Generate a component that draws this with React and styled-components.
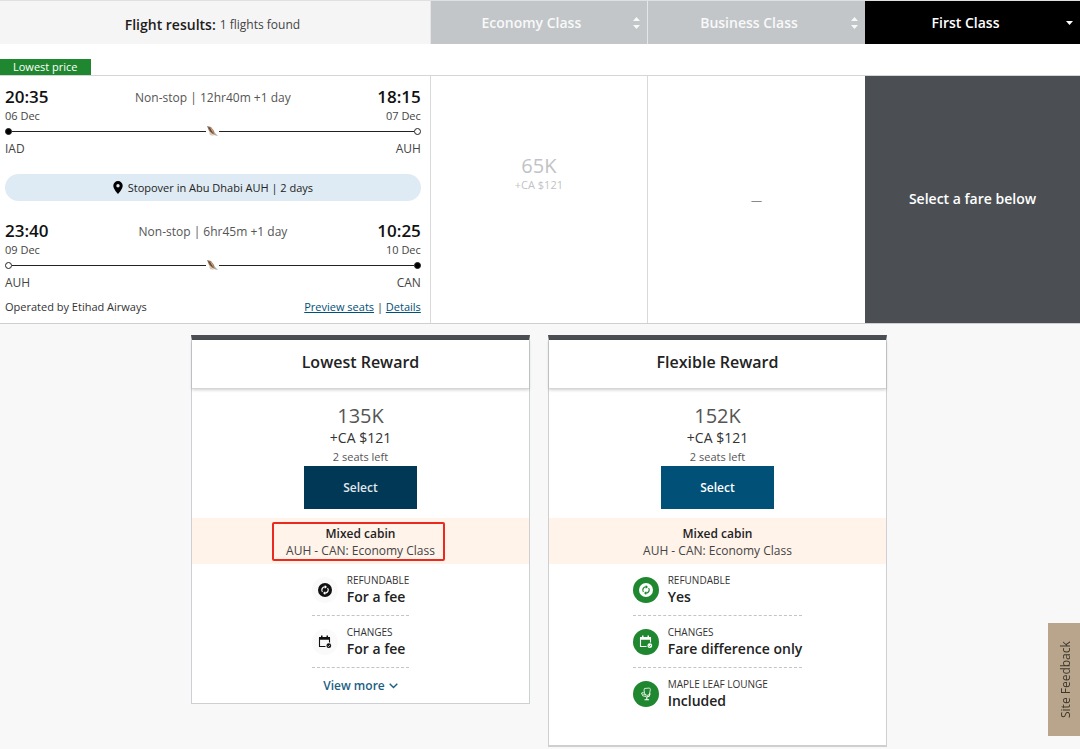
import styled, { createGlobalStyle, css } from "styled-components";

const GlobalStyle = createGlobalStyle`
  * {
    box-sizing: border-box;
  }

  body {
    margin: 0;
    background: #f8f8f8;
    color: #222;
    font-family: "Open Sans", "Noto Sans", sans-serif;
    font-size: 12px;
  }

  button {
    font-family: inherit;
    cursor: pointer;
  }

  h1, h2, p {
    margin: 0;
  }
`;

const columns = css`
  display: grid;
  grid-template-columns: 39.8% 20.1% 20.2% 1fr;
`;

const Results = styled.main`
  background: #fff;
`;

const HeaderRow = styled.header`
  ${columns}
  height: 44px;
  border-top: 1px solid #dfe1e1;
`;

const Title = styled.div`
  display: flex;
  align-items: center;
  justify-content: center;
  gap: 4px;
  padding: 4px 5px 0 0;
  background: #f5f5f5;
  font-size: 12px;
  line-height: 20px;
  color: #444;
`;

const TitleText = styled.h1`
  font-size: 14px;
  font-weight: 600;
  color: #1c1c1c;
`;

const CabinTab = styled.button`
  display: grid;
  grid-template-columns: 1fr auto;
  align-items: center;
  padding: 0 7px 0 0;
  border: 0;
  border-left: 1px solid ${(props) => (props.$active ? "#000" : "#e4e6e7")};
  background: ${(props) => (props.$active ? "#000" : "#c2c6c9")};
  color: ${(props) => (props.$active ? "#fff" : "#f8f9f9")};
  font-size: 14px;
  font-weight: 600;
`;

const TabLabel = styled.span`
  text-align: center;
`;

const BadgeRow = styled.div`
  display: flex;
  padding-top: 15px;
`;

const Badge = styled.span`
  padding: 0 13px;
  background: #1f8730;
  color: #fff;
  font-size: 11px;
  line-height: 16px;
`;

const FlightRow = styled.section`
  ${columns}
  min-height: 249px;
  border-top: 1px solid #d5d5d5;
  border-bottom: 1px solid #cfcfcf;
`;

const Itinerary = styled.div`
  padding: 9px 9px 0 5px;
`;

const LegTop = styled.div`
  display: flex;
  justify-content: space-between;
  height: 23px;
  line-height: 23px;
`;

const Time = styled.span`
  font-size: 17px;
  font-weight: 600;
  color: #111;
`;

const Duration = styled.span`
  font-size: 12px;
  line-height: 26px;
  color: #555;
`;

const LegDates = styled.div`
  display: flex;
  justify-content: space-between;
  font-size: 11px;
  line-height: 15px;
  color: #444;
`;

const LegCodes = styled.div`
  display: flex;
  justify-content: space-between;
  font-size: 12px;
  line-height: 20px;
  color: #444;
`;

const Track = styled.div`
  display: flex;
  align-items: center;
  height: 16px;
`;

const Dot = styled.span`
  width: 7px;
  height: 7px;
  border: 1px solid #222;
  border-radius: 50%;
  background: ${(props) => (props.$filled ? "#000" : "#fff")};
`;

const Line = styled.span`
  flex: 1;
  height: 1px;
  background: #222;
`;

const Stopover = styled.div`
  display: flex;
  align-items: center;
  justify-content: center;
  gap: 5px;
  height: 27px;
  margin: 15px 0 18px;
  border-radius: 14px;
  background: #deebf4;
  font-size: 11px;
  color: #222;
`;

const ItineraryFooter = styled.div`
  display: flex;
  justify-content: space-between;
  margin-top: 6px;
  font-size: 11px;
  line-height: 16px;
  color: #333;
`;

const TextLink = styled.a`
  color: #005078;
`;

const FareCell = styled.div`
  display: flex;
  flex-direction: column;
  align-items: center;
  justify-content: center;
  border-left: 1px solid #d9d9d9;
  padding-bottom: ${(props) => (props.$empty ? "0" : "54px")};
  color: ${(props) => (props.$empty ? "#888" : "#bfc3c6")};
  font-size: 11px;
  line-height: 14px;
`;

const FarePoints = styled.span`
  font-size: 20px;
  line-height: 24px;
`;

const SelectedCell = styled.div`
  display: flex;
  align-items: center;
  justify-content: center;
  padding-bottom: 2px;
  background: #4b4f54;
  color: #fff;
  font-size: 14px;
  font-weight: 600;
`;

const Fares = styled.section`
  display: flex;
  align-items: flex-start;
  justify-content: center;
  gap: 18px;
  padding: 11px 18px 3px 16px;
  background: #f8f8f8;
`;

const Card = styled.article`
  flex: 0 1 339px;
  padding-bottom: ${(props) => (props.$tall ? "25px" : "8px")};
  border: 1px solid #cdcfd0;
  border-top: 5px solid #4b4f54;
  border-bottom-width: ${(props) => (props.$tall ? "2px" : "1px")};
  background: #fff;
`;

const CardTitle = styled.h2`
  height: 49px;
  border-bottom: 1px solid #d5d5d5;
  box-shadow: 0 1px 3px rgba(0, 0, 0, 0.2);
  font-size: 16px;
  font-weight: 600;
  line-height: 44px;
  text-align: center;
  color: #222;
`;

const Price = styled.div`
  display: flex;
  flex-direction: column;
  align-items: center;
  padding: 13px 0 9px;
`;

const Points = styled.span`
  font-size: 20px;
  line-height: 27px;
  color: #555;
`;

const Cash = styled.span`
  font-size: 14px;
  line-height: 17px;
  color: #333;
`;

const Seats = styled.span`
  margin-top: 2px;
  font-size: 11px;
  line-height: 18px;
  color: #555;
`;

const SelectButton = styled.button`
  width: 113px;
  height: 43px;
  border: 0;
  background: ${(props) => (props.$dark ? "#003855" : "#005078")};
  color: ${(props) => (props.$dark ? "#e3e8ec" : "#fff")};
  font-size: 12px;
  font-weight: 600;
`;

const MixedCabin = styled.div`
  position: relative;
  height: 46px;
  padding-top: 7px;
  background: #fff3ea;
  font-size: 12px;
  line-height: 17px;
  text-align: center;
  color: #444;
`;

const MixedTitle = styled.p`
  font-weight: 600;
  color: #222;
`;

const Highlight = styled.span`
  position: absolute;
  inset: 4px 84px 3px 80px;
  border: 2px solid #ea2a20;
  border-radius: 2px;
`;

const Features = styled.ul`
  width: fit-content;
  margin: 0 auto;
  padding: 0;
  list-style: none;
`;

const Feature = styled.li`
  display: flex;
  align-items: center;
  gap: 9px;
  height: 52px;
  border-bottom: 1px dashed ${(props) => (props.$last ? "transparent" : "#c4c4c4")};
`;

const FeatureIcon = styled.span`
  display: grid;
  place-items: center;
  width: 26px;
  height: 26px;
  border-radius: 50%;
  background: ${(props) => (props.$included ? "#1f8730" : "#fafafa")};
  color: ${(props) => (props.$included ? "#fff" : "#111")};
`;

const FeatureText = styled.div`
  padding-bottom: 1px;
`;

const FeatureLabel = styled.p`
  font-size: 10px;
  line-height: 16px;
  color: #333;
`;

const FeatureValue = styled.p`
  font-size: 14px;
  font-weight: 600;
  line-height: 18px;
  color: #222;
`;

const ViewMore = styled.button`
  display: flex;
  align-items: center;
  gap: 4px;
  margin: 9px auto 0;
  padding: 0;
  border: 0;
  background: none;
  color: #1c5f83;
  font-size: 12px;
  font-weight: 600;
  line-height: 18px;
`;

const Feedback = styled.button`
  position: fixed;
  right: 0;
  bottom: 13px;
  width: 32px;
  height: 113px;
  padding: 0 4px 0 0;
  border: 0;
  background: #b9a58b;
  color: #3c3830;
  font-size: 12px;
  writing-mode: vertical-rl;
  transform: rotate(180deg);
`;

const SortIcon = ({ active }) => (
  <svg width="8" height="14" viewBox="0 0 8 14" fill="currentColor" aria-hidden="true">
    {active ? (
      <path d="M1 5h7L4.500 9z" />
    ) : (
      <>
        <path d="M1 5h7L4.500 1z" />
        <path d="M1 9h7L4.500 13z" />
      </>
    )}
  </svg>
);

const AirlineIcon = () => (
  <svg width="13" height="12" viewBox="0 0 13 12" aria-hidden="true">
    <path d="M1 1 5 2 8 6 9 10 6 9 3 6z" fill="#9c765a" />
    <path d="M2 2 4 3 7 8 5 7z" fill="#5b4a40" />
    <path d="M4 2 6 4 8 8 6 6z" fill="#d8a878" />
    <path d="M3 7 6 9 8 11 4 10z" fill="#d9c8a9" />
    <path d="M8 7 10 9 12 11 8 10z" fill="#a7a7a5" />
  </svg>
);

const PinIcon = () => (
  <svg width="10" height="13" viewBox="0 0 10 13" aria-hidden="true">
    <path
      fillRule="evenodd"
      d="M5 0a4.700 4.700 0 0 0-4.700 4.700C.3 8 5 13 5 13s4.700-5 4.700-8.300A4.700 4.700 0 0 0 5 0zm0 3a1.700 1.700 0 1 1 0 3.400A1.700 1.700 0 0 1 5 3z"
    />
  </svg>
);

const RefundIcon = ({ included }) => {
  const arrows = included ? "#1f8730" : "#fff";
  return (
    <svg width="14" height="14" viewBox="0 0 14 14" aria-hidden="true">
      <circle cx="7" cy="7" r="7" fill="currentColor" />
      <g fill="none" stroke={arrows} strokeWidth="1.200">
        <path d="M4.400 9A3.200 3.200 0 0 1 7 3.900" />
        <path d="M9.600 5A3.200 3.200 0 0 1 7 10.100" />
      </g>
      <path d="M6.800 2 9 3.900 6.800 5.800zM7.200 8.200 5 10.100l2.200 1.900z" fill={arrows} />
    </svg>
  );
};

const ChangeIcon = ({ included }) => (
  <svg width="14" height="14" viewBox="0 0 14 14" aria-hidden="true">
    <path d="M1 2h11v2.700H1zM3 .5h1.500V3H3zM8.500.5H10V3H8.500z" fill="currentColor" />
    <path d="M7.500 11.500h-6V3h10v4.500" fill="none" stroke="currentColor" strokeWidth="1.100" />
    <circle cx="10.800" cy="10.700" r="2.400" fill="currentColor" />
    <path
      d="m9.600 10.700.9.900 1.600-1.700"
      fill="none"
      stroke={included ? "#1f8730" : "#fff"}
      strokeWidth=".7"
    />
  </svg>
);

const LoungeIcon = () => (
  <svg width="12" height="14" viewBox="0 0 12 14" fill="none" stroke="currentColor" aria-hidden="true">
    <path d="M4.500 1.500 9.500 1l.9 1.200-1 5.300L7 8.500 4.800 7 4 3z" strokeWidth=".8" />
    <path d="M3.800 5.200 1.500 6l1.200 2.800L6 9.600M2.600 6.800l3.200 1.400" strokeWidth=".8" />
    <path d="M10.200 6.500 9 9.300 6.800 10v2.500M4.500 12.700h4.600" strokeWidth="1.100" />
  </svg>
);

const ChevronIcon = () => (
  <svg width="9" height="6" viewBox="0 0 9 6" fill="none" stroke="currentColor" strokeWidth="1.400" aria-hidden="true">
    <path d="m.7.8 3.800 3.800L8.300.8" />
  </svg>
);

const icons = {
  refund: RefundIcon,
  change: ChangeIcon,
  lounge: LoungeIcon,
};

const cabins = ["Economy Class", "Business Class", "First Class"];

const legs = [
  {
    from: { time: "20:35", date: "06 Dec", code: "IAD" },
    to: { time: "18:15", date: "07 Dec", code: "AUH" },
    duration: "Non-stop | 12hr40m +1 day",
    startFilled: true,
  },
  {
    from: { time: "23:40", date: "09 Dec", code: "AUH" },
    to: { time: "10:25", date: "10 Dec", code: "CAN" },
    duration: "Non-stop | 6hr45m +1 day",
    startFilled: false,
  },
];

const fares = [
  {
    name: "Lowest Reward",
    points: "135K",
    dark: true,
    highlighted: true,
    viewMore: true,
    features: [
      { icon: "refund", label: "REFUNDABLE", value: "For a fee" },
      { icon: "change", label: "CHANGES", value: "For a fee" },
    ],
  },
  {
    name: "Flexible Reward",
    points: "152K",
    features: [
      { icon: "refund", label: "REFUNDABLE", value: "Yes", included: true },
      { icon: "change", label: "CHANGES", value: "Fare difference only", included: true },
      { icon: "lounge", label: "MAPLE LEAF LOUNGE", value: "Included", included: true },
    ],
  },
];

const Leg = ({ leg }) => (
  <div>
    <LegTop>
      <Time>{leg.from.time}</Time>
      <Duration>{leg.duration}</Duration>
      <Time>{leg.to.time}</Time>
    </LegTop>
    <LegDates>
      <span>{leg.from.date}</span>
      <span>{leg.to.date}</span>
    </LegDates>
    <Track>
      <Dot $filled={leg.startFilled} />
      <Line />
      <AirlineIcon />
      <Line />
      <Dot $filled={!leg.startFilled} />
    </Track>
    <LegCodes>
      <span>{leg.from.code}</span>
      <span>{leg.to.code}</span>
    </LegCodes>
  </div>
);

const FareCard = ({ fare }) => (
  <Card $tall={!fare.viewMore}>
    <CardTitle>{fare.name}</CardTitle>
    <Price>
      <Points>{fare.points}</Points>
      <Cash>+CA $121</Cash>
      <Seats>2 seats left</Seats>
      <SelectButton type="button" $dark={fare.dark}>
        Select
      </SelectButton>
    </Price>
    <MixedCabin>
      <MixedTitle>Mixed cabin</MixedTitle>
      <p>AUH - CAN: Economy Class</p>
      {fare.highlighted && <Highlight />}
    </MixedCabin>
    <Features>
      {fare.features.map((feature, index) => {
        const Icon = icons[feature.icon];
        return (
          <Feature
            key={feature.label}
            $last={!fare.viewMore && index === fare.features.length - 1}
          >
            <FeatureIcon $included={feature.included}>
              <Icon included={feature.included} />
            </FeatureIcon>
            <FeatureText>
              <FeatureLabel>{feature.label}</FeatureLabel>
              <FeatureValue>{feature.value}</FeatureValue>
            </FeatureText>
          </Feature>
        );
      })}
    </Features>
    {fare.viewMore && (
      <ViewMore type="button">
        View more <ChevronIcon />
      </ViewMore>
    )}
  </Card>
);

const App = () => {
  return (
    <>
      <GlobalStyle />
      <Results>
        <HeaderRow>
          <Title>
            <TitleText>Flight results:</TitleText>
            <span>1 flights found</span>
          </Title>
          {cabins.map((cabin) => {
            const active = cabin === "First Class";
            return (
              <CabinTab key={cabin} type="button" $active={active}>
                <TabLabel>{cabin}</TabLabel>
                <SortIcon active={active} />
              </CabinTab>
            );
          })}
        </HeaderRow>
        <BadgeRow>
          <Badge>Lowest price</Badge>
        </BadgeRow>
        <FlightRow>
          <Itinerary>
            <Leg leg={legs[0]} />
            <Stopover>
              <PinIcon />
              Stopover in Abu Dhabi AUH | 2 days
            </Stopover>
            <Leg leg={legs[1]} />
            <ItineraryFooter>
              <span>Operated by Etihad Airways</span>
              <span>
                <TextLink href="#seats">Preview seats</TextLink> |{" "}
                <TextLink href="#details">Details</TextLink>
              </span>
            </ItineraryFooter>
          </Itinerary>
          <FareCell>
            <FarePoints>65K</FarePoints>
            <span>+CA $121</span>
          </FareCell>
          <FareCell $empty>—</FareCell>
          <SelectedCell>Select a fare below</SelectedCell>
        </FlightRow>
        <Fares>
          {fares.map((fare) => (
            <FareCard key={fare.name} fare={fare} />
          ))}
        </Fares>
      </Results>
      <Feedback type="button">Site Feedback</Feedback>
    </>
  );
};

export default App;
